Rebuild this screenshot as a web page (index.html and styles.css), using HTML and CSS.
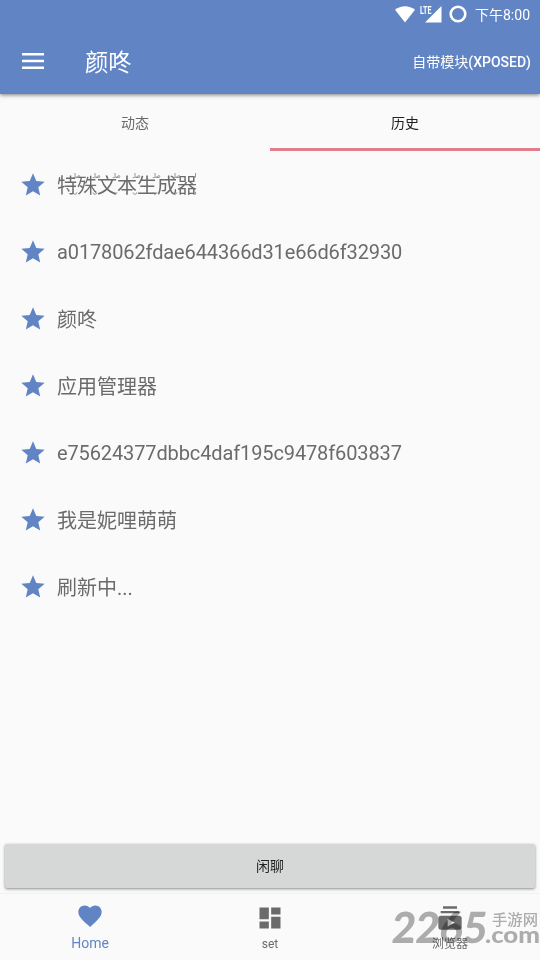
FILE: index.html
```html
<!DOCTYPE html>
<html lang="zh-CN">
<head>
  <meta charset="UTF-8">
  <meta name="viewport" content="width=device-width, initial-scale=1.0">
  <title>颜咚</title>
  <link rel="stylesheet" href="styles.css">
</head>
<body>
  <!-- shared icons -->
  <svg class="defs" width="0" height="0">
    <symbol id="star" viewBox="0 0 24 24">
      <path d="M12 17.27L18.18 21l-1.64-7.03L22 9.24l-7.19-.61L12 2 9.19 8.63 2 9.24l5.46 4.73L5.82 21z"/>
    </symbol>
    <symbol id="mark" viewBox="0 0 12 24">
      <path d="M4 0v3.500q0 1.500-2.300 1.200M4 4.200h2.500q.3-2 1.700-1.500t.3 1.700H5M2 19.500q.3 1.800 2 1.800t2-2"/>
    </symbol>
  </svg>

  <div class="app">
    <header class="header">
      <div class="status-bar">
        <svg class="wifi" width="20" height="17" viewBox="0 0 20 17"><path d="M10 16.500L0 3.800Q4.500.2 10 .2t10 3.600z"/></svg>
        <svg class="signal" width="22" height="18" viewBox="0 0 22 18">
          <path d="M21.500 1v16.500H5z"/>
          <text x="0" y="8.500" textLength="11.500" lengthAdjust="spacingAndGlyphs">LTE</text>
        </svg>
        <svg class="ring" width="18" height="18" viewBox="0 0 18 18"><circle cx="9" cy="9" r="7.300"/></svg>
        <span class="time">下午8:00</span>
      </div>
      <div class="toolbar">
        <svg class="menu" width="22" height="16" viewBox="0 0 22 16"><path d="M0 0h22v2.500H0zM0 6.700h22v2.500H0zM0 13.400h22v2.500H0z"/></svg>
        <h1 class="title">颜咚</h1>
        <span class="action">自带模块<b>(XPOSED)</b></span>
      </div>
    </header>

    <div class="tabs">
      <div class="tab">动态</div>
      <div class="tab active">历史</div>
    </div>

    <ul class="list">
      <li class="row">
        <svg class="star"><use href="#star"/></svg>
        <span class="marked">特殊文本生成器
          <svg class="marks" width="142" height="24" viewBox="0 0 142 24">
            <use href="#mark" x="14" width="12" height="24"/>
            <use href="#mark" x="34" width="12" height="24"/>
            <use href="#mark" x="54" width="12" height="24"/>
            <use href="#mark" x="74" width="12" height="24"/>
            <use href="#mark" x="94" width="12" height="24"/>
            <use href="#mark" x="114" width="12" height="24"/>
            <path d="M138.500 0v4.200h-2.500M136.500 19.500q.3 1.800 2 1.800v-2.500"/>
          </svg>
        </span>
      </li>
      <li class="row"><svg class="star"><use href="#star"/></svg><span class="hash">a0178062fdae644366d31e66d6f32930</span></li>
      <li class="row"><svg class="star"><use href="#star"/></svg><span>颜咚</span></li>
      <li class="row"><svg class="star"><use href="#star"/></svg><span>应用管理器</span></li>
      <li class="row"><svg class="star"><use href="#star"/></svg><span class="hash">e75624377dbbc4daf195c9478f603837</span></li>
      <li class="row"><svg class="star"><use href="#star"/></svg><span>我是妮哩萌萌</span></li>
      <li class="row"><svg class="star"><use href="#star"/></svg><span>刷新中...</span></li>
    </ul>

    <button class="chat">闲聊</button>

    <nav class="bottom-nav">
      <div class="nav-item active">
        <svg width="28" height="28" viewBox="0 0 24 24"><path d="M12 21.350l-1.450-1.320C5.400 15.360 2 12.280 2 8.500 2 5.420 4.420 3 7.500 3c1.740 0 3.410.81 4.500 2.090C13.090 3.810 14.760 3 16.500 3 19.580 3 22 5.420 22 8.500c0 3.780-3.400 6.860-8.550 11.540z"/></svg>
        <span>Home</span>
      </div>
      <div class="nav-item">
        <svg width="28" height="28" viewBox="0 0 24 24"><path d="M3 13h8V3H3zm0 8h8v-6H3zm10 0h8V11h-8zm0-18v6h8V3z"/></svg>
        <span>set</span>
      </div>
      <div class="nav-item">
        <svg width="28" height="28" viewBox="0 0 24 24"><path d="M20 8H4V6h16zm-2-6H6v2h12zm4 10v8c0 1.100-.9 2-2 2H4c-1.100 0-2-.9-2-2v-8c0-1.100.9-2 2-2h16c1.100 0 2 .9 2 2zm-6 4l-6-3.270v6.530z"/></svg>
        <span>浏览器</span>
      </div>
      <svg class="watermark" width="152" height="50" viewBox="0 0 152 50">
        <text class="wm-number" transform="translate(3 40) skewX(-5)" textLength="95" lengthAdjust="spacingAndGlyphs">2265</text>
        <text class="wm-name" x="104" y="22" textLength="46" lengthAdjust="spacingAndGlyphs">手游网</text>
        <text class="wm-com" x="97" y="39.500" textLength="55" lengthAdjust="spacingAndGlyphs">.com</text>
      </svg>
    </nav>
  </div>
</body>
</html>
```

FILE: styles.css
```css
* {
  box-sizing: border-box;
}

body {
  margin: 0;
  background: #fafafa;
  font-family: Roboto, "Noto Sans CJK SC", sans-serif;
  color: #6b6b6b;
}

.defs {
  display: block;
}

.app {
  display: flex;
  flex-direction: column;
  height: 960px;
  overflow: hidden;
}

.header {
  height: 94px;
  background: #6185c4;
  color: #fff;
  fill: #fff;
  box-shadow: 0 1px 4px rgba(0, 0, 0, 0.5);
}

.status-bar {
  display: flex;
  align-items: center;
  justify-content: flex-end;
  height: 28px;
  padding-right: 10px;
}

.signal {
  margin-left: 5px;
  overflow: visible;
}

.signal text {
  font-size: 10px;
  font-weight: bold;
}

.ring {
  margin-left: 7px;
  fill: none;
  stroke: #fff;
  stroke-width: 2.6;
}

.time {
  margin-left: 8px;
  font-size: 14px;
}

.toolbar {
  display: flex;
  align-items: center;
  height: 66px;
  padding: 0 9px 0 22px;
}

.title {
  margin: 0 0 0 41px;
  font-size: 23.3px;
  font-weight: normal;
}

.action {
  margin-left: auto;
  font-size: 14px;
}

.action b {
  font-weight: 500;
}

.tabs {
  display: flex;
  height: 57px;
}

.tab {
  flex: 1;
  line-height: 58px;
  text-align: center;
  font-size: 14px;
}

.tab.active {
  color: #212121;
  border-bottom: 3px solid #e07e8c;
}

.list {
  flex: 1;
  margin: 0;
  padding: 0;
  list-style: none;
}

.row {
  display: flex;
  align-items: center;
  height: 67px;
  padding-left: 19px;
  font-size: 20px;
}

.star {
  width: 28px;
  height: 28px;
  margin-right: 10px;
  fill: #6185c4;
}

.hash {
  letter-spacing: -0.12px;
}

.marked {
  position: relative;
}

.marks {
  position: absolute;
  left: 0;
  top: 3px;
  overflow: visible;
  fill: none;
  stroke: #808080;
  stroke-width: 0.8;
}

.chat {
  height: 44px;
  margin: 0 5px 5px;
  padding: 0 0 2px;
  border: none;
  border-radius: 2px;
  background: #d6d8d7;
  box-shadow: 0 1px 3px rgba(0, 0, 0, 0.45);
  font-family: inherit;
  font-size: 14px;
  color: #212121;
}

.bottom-nav {
  position: relative;
  display: flex;
  height: 67px;
  border-top: 1px solid #f2f0f1;
}

.nav-item {
  flex: 1;
  display: flex;
  flex-direction: column;
  align-items: center;
  padding-top: 10px;
  font-size: 12px;
  line-height: 24px;
  fill: #6b6b6b;
}

.nav-item.active {
  padding-top: 8px;
  font-size: 14px;
  line-height: 26px;
  color: #6185c4;
  fill: #6185c4;
}

.watermark {
  position: absolute;
  right: 0;
  top: 9px;
  overflow: visible;
  fill: #b0b0b0;
  mix-blend-mode: multiply;
}

.wm-number {
  font-family: Lato, sans-serif;
  font-size: 43px;
  font-weight: 900;
}

.wm-name {
  font-size: 15px;
  font-weight: 500;
}

.wm-com {
  font-family: Lato, sans-serif;
  font-size: 22px;
  font-weight: 900;
}
```
